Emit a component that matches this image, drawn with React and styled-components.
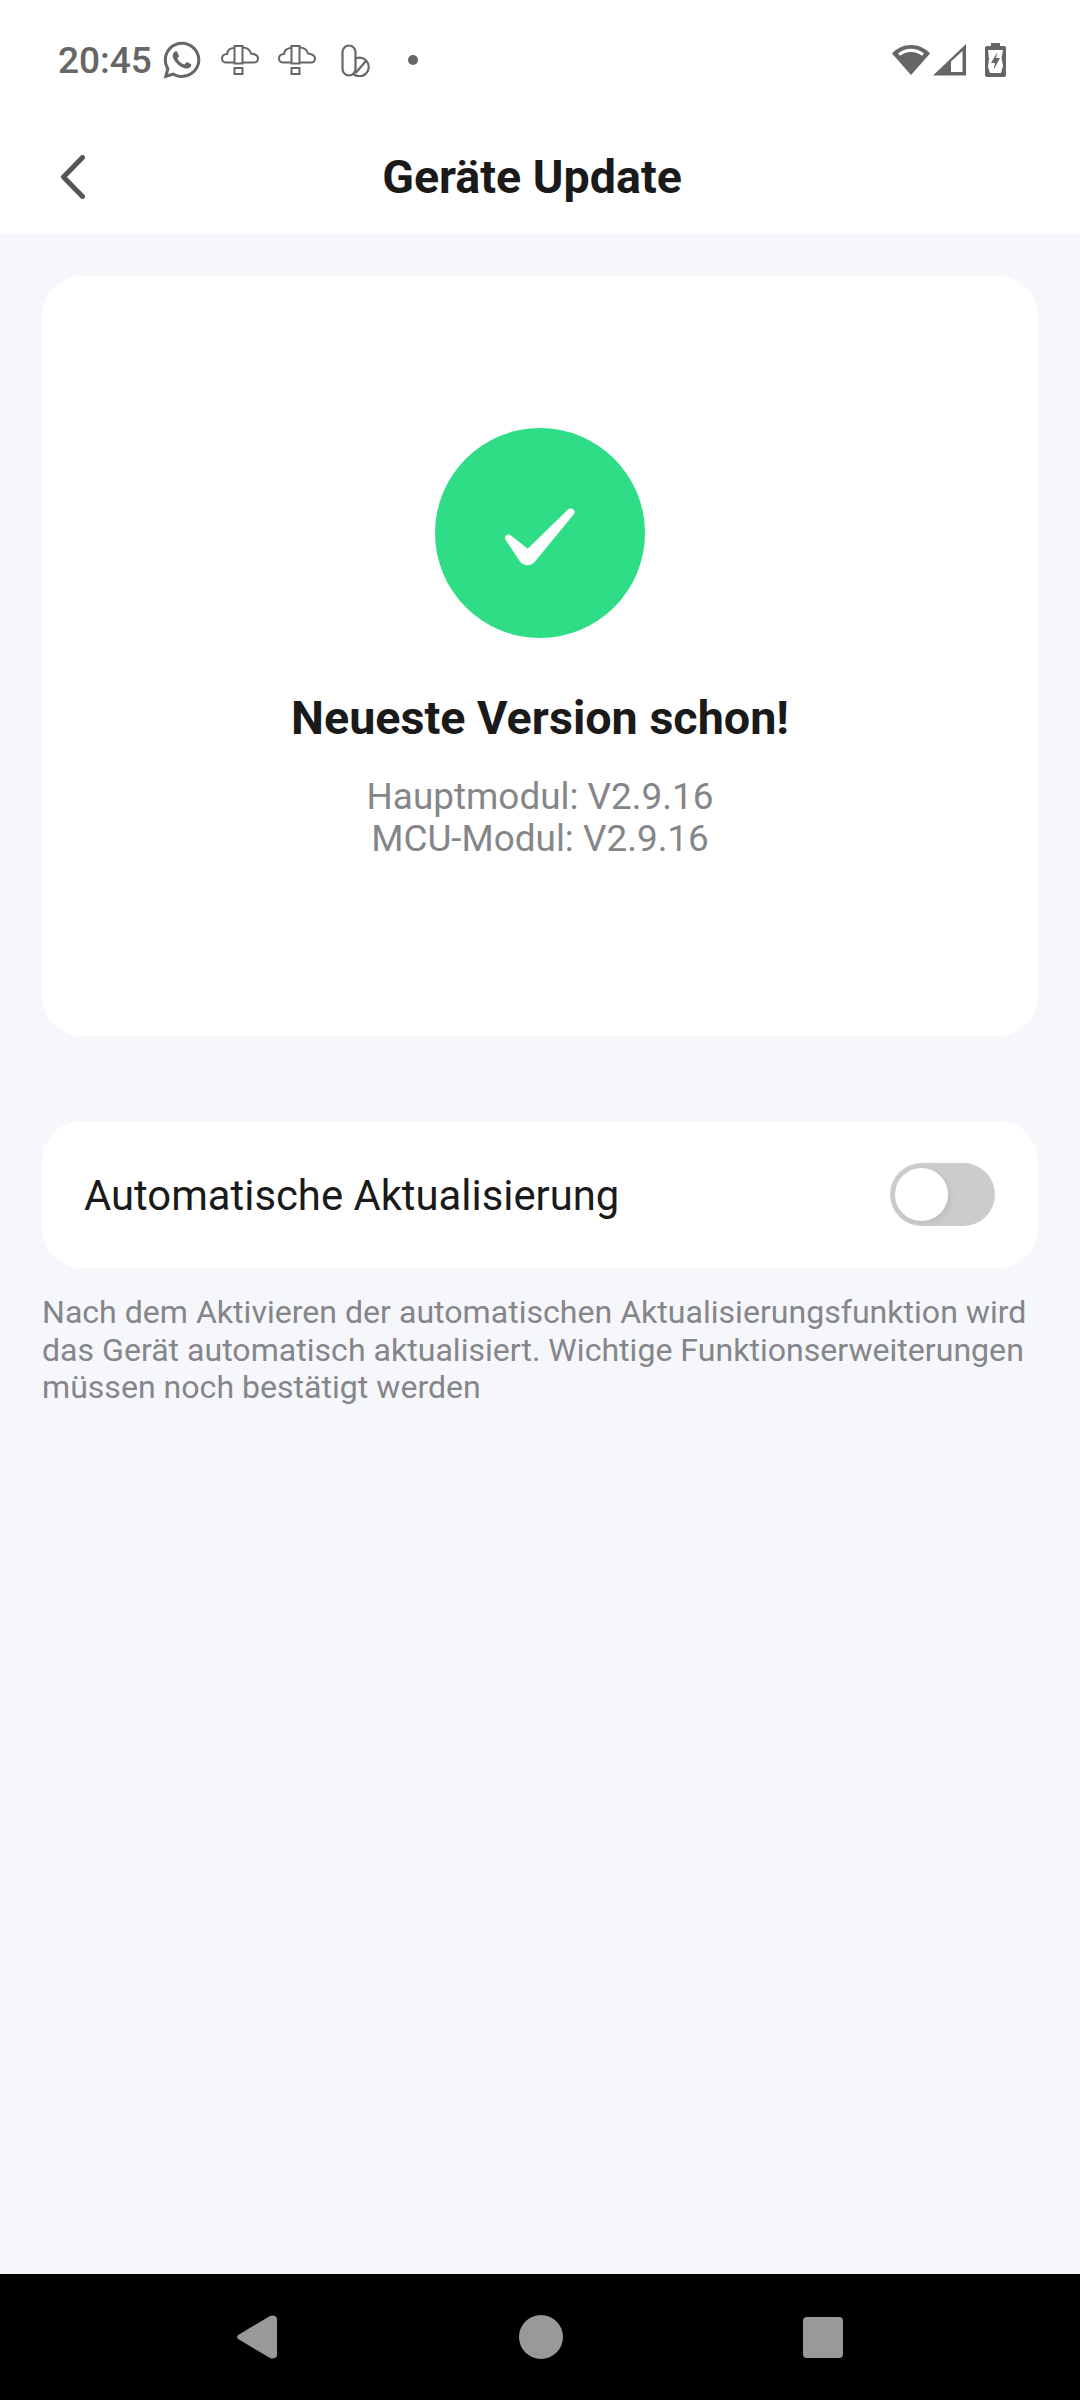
import React from 'react';
import styled, { createGlobalStyle } from 'styled-components';
import { FaWhatsapp } from 'react-icons/fa';

const GlobalStyle = createGlobalStyle`
  html, body {
    margin: 0;
    padding: 0;
    background: #f5f7fb;
    font-family: Roboto, "Liberation Sans", sans-serif;
  }
`;

const Page = styled.div`
  display: flex;
  flex-direction: column;
  width: 1080px;
  height: 2400px;
  background: #f5f7fb;
`;

const StatusBar = styled.div`
  display: flex;
  align-items: center;
  justify-content: space-between;
  height: 120px;
  padding: 0 74px 0 58px;
  background: #fff;
  color: #666;
`;

const StatusGroup = styled.div`
  display: flex;
  align-items: center;
`;

const Time = styled.span`
  font-size: 37px;
  font-weight: 500;
  margin-right: 9px;
`;

const StatusIcon = styled.svg`
  display: block;
  flex: none;
  margin-right: ${(p) => p.$gap || 0}px;
`;

const WhatsApp = styled(FaWhatsapp)`
  display: block;
  flex: none;
  margin-right: 18px;
  color: #666;
`;

const Dot = styled.span`
  width: 10px;
  height: 10px;
  margin-left: 38px;
  border-radius: 50%;
  background: #666;
`;

const Header = styled.header`
  display: flex;
  align-items: center;
  height: 114px;
  padding-left: 60px;
  background: #fff;
`;

const Title = styled.h1`
  flex: 1;
  margin: 0;
  padding-right: 106px;
  text-align: center;
  font-size: 46.6px;
  font-weight: 700;
  color: #1a1a1a;
`;

const Main = styled.main`
  flex: 1;
  padding: 42px 42px 0;
`;

const Card = styled.section`
  display: flex;
  flex-direction: column;
  align-items: center;
  height: 760px;
  box-sizing: border-box;
  padding-top: 152px;
  background: #fff;
  border-radius: 40px;
`;

const CheckCircle = styled.div`
  display: flex;
  align-items: center;
  justify-content: center;
  width: 210px;
  height: 210px;
  border-radius: 50%;
  background: #30dd87;
`;

const CheckMark = styled.svg`
  display: block;
  margin-top: 8px;
`;

const Heading = styled.h2`
  margin: 52px 0 0;
  font-size: 46.7px;
  line-height: 56px;
  font-weight: 700;
  color: #1a1a1a;
`;

const Version = styled.div`
  margin-top: 30px;
  font-size: 36.9px;
  line-height: 42px;
  text-align: center;
  color: #85868a;
`;

const ToggleRow = styled.div`
  display: flex;
  align-items: center;
  justify-content: space-between;
  height: 147px;
  margin-top: 85px;
  padding: 0 43px 0 42px;
  background: #fff;
  border-radius: 40px;
  font-size: 41.8px;
  color: #1a1a1a;
`;

const RowLabel = styled.span`
  padding-top: 2px;
`;

const Switch = styled.span`
  display: flex;
  align-items: center;
  width: 105px;
  height: 63px;
  box-sizing: border-box;
  padding: 0 5px;
  border-radius: 32px;
  background: #ccc;
`;

const Knob = styled.span`
  width: 53px;
  height: 53px;
  border-radius: 50%;
  background: #fff;
  box-shadow: 2px 2px 6px rgba(0, 0, 0, 0.08);
`;

const Note = styled.p`
  margin: 26px 0 0;
  font-size: 32.1px;
  line-height: 37.5px;
  color: #85868a;
`;

const NavRow = styled.nav`
  display: flex;
  align-items: center;
  height: 126px;
  padding-left: 237px;
  background: #000;
`;

const NavTriangle = styled.svg`
  display: block;
`;

const NavCircle = styled.span`
  width: 44px;
  height: 44px;
  margin-left: 242px;
  border-radius: 50%;
  background: #999;
`;

const NavSquare = styled.span`
  width: 40px;
  height: 41px;
  margin-left: 240px;
  border-radius: 4px;
  background: #999;
`;

const CloudAlert = ({ gap }) => (
  <StatusIcon width="38" height="30" viewBox="0 0 38 30" fill="none" stroke="#666" strokeWidth="2" $gap={gap}>
    <path d="M13.500 3C9 3 6.500 5.500 6 9c-3 0-5 2-5 4.500S3 17.500 5 17.500h8.500M21.500 2.500c4.500 0 7.500 2.500 8.500 6 4 .5 7 2.500 7 5s-2 4-4 4H21.500" />
    <path d="M13.500 1h8v17.500h-8zM13.500 23h8v6h-8z" />
  </StatusIcon>
);

const App = () => (
  <Page>
    <GlobalStyle />
    <StatusBar>
      <StatusGroup>
        <Time>20:45</Time>
        <WhatsApp size={42} />
        <CloudAlert gap={19} />
        <CloudAlert gap={25} />
        <StatusIcon width="29" height="33" viewBox="0 0 29 33" fill="none" stroke="#666" strokeWidth="2.200">
          <circle cx="18.500" cy="23" r="9.300" />
          <rect x="1.500" y="1.500" width="13" height="30" rx="6.500" fill="#fff" />
          <path d="M14.500 29L25 17" />
        </StatusIcon>
        <Dot />
      </StatusGroup>
      <StatusGroup>
        <StatusIcon width="38" height="32" viewBox="0 0 38 32" $gap={3}>
          <path d="M19 31L0 9.500C5 4 11.500 1 19 1s14 3 19 8.500z" fill="#666" />
          <path d="M6 9.500C9.500 6.500 14 4.800 19 4.800s9.500 1.700 13 4.700l-2 2.300C27 9.300 23.300 8 19 8s-8 1.300-11 3.800z" fill="#fff" />
        </StatusIcon>
        <StatusIcon width="33" height="32" viewBox="0 0 33 32" $gap={19}>
          <path d="M0 31.500L33 0v31.500zM18 17.500V28h11.500V7z" fill="#666" fillRule="evenodd" />
        </StatusIcon>
        <StatusIcon width="21" height="34" viewBox="0 0 21 34">
          <path d="M6 0h9v3h4c1.200 0 2 .8 2 2v27c0 1.200-.8 2-2 2H2c-1.200 0-2-.8-2-2V5c0-1.200.8-2 2-2h4z" fill="#666" />
          <path d="M3 7h15l-1.500 8 1.500 8-2 7H5l-2-6 1-8z" fill="#fff" />
          <path d="M12.500 9L6 20h4l-1.500 7L15 15h-4z" fill="#666" />
        </StatusIcon>
      </StatusGroup>
    </StatusBar>
    <Header>
      <svg width="30" height="44" viewBox="0 0 30 44" fill="none" stroke="#555" strokeWidth="5" strokeLinecap="round" strokeLinejoin="round">
        <path d="M22.500 2.500L3.500 22l19 19.500" />
      </svg>
      <Title>Geräte Update</Title>
    </Header>
    <Main>
      <Card>
        <CheckCircle>
          <CheckMark width="70" height="58" viewBox="0 0 70 58">
            <path d="M1 27.500c1.500-1.500 3.500-1.500 5 0L22.700 40.700 63 1.500c2.500-2.500 8.500 0 6 4.500L30 53.500c-4 5-11 5-15 0L1 32.500c-1.200-1.500-1.200-3.500 0-5z" fill="#fff" />
          </CheckMark>
        </CheckCircle>
        <Heading>Neueste Version schon!</Heading>
        <Version>
          Hauptmodul: V2.9.16
          <br />
          MCU-Modul: V2.9.16
        </Version>
      </Card>
      <ToggleRow>
        <RowLabel>Automatische Aktualisierung</RowLabel>
        <Switch>
          <Knob />
        </Switch>
      </ToggleRow>
      <Note>
        Nach dem Aktivieren der automatischen Aktualisierungsfunktion wird das Gerät automatisch aktualisiert. Wichtige Funktionserweiterungen müssen noch bestätigt werden
      </Note>
    </Main>
    <NavRow>
      <NavTriangle width="40" height="44" viewBox="0 0 40 44">
        <path d="M2 19.500L33 1c3-1.500 7 0 7 3v36c0 3-4 4.500-7 3L2 24.500c-2.500-1.500-2.500-3.500 0-5z" fill="#999" />
      </NavTriangle>
      <NavCircle />
      <NavSquare />
    </NavRow>
  </Page>
);

export default App;
